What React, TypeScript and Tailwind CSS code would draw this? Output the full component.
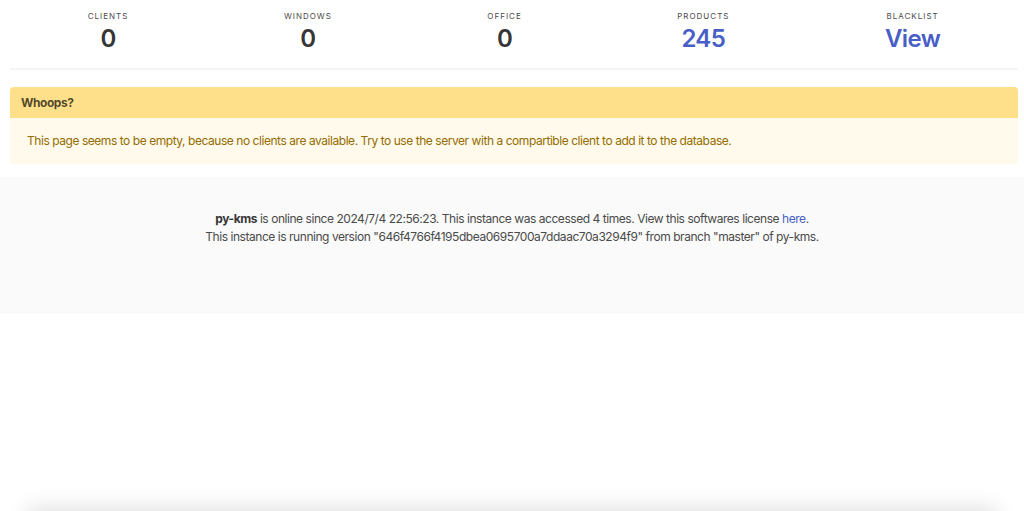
export default function App() {
  const stats = [
    { label: 'Clients', value: '0' },
    { label: 'Windows', value: '0' },
    { label: 'Office', value: '0' },
    { label: 'Products', value: '245', link: true },
    { label: 'Blacklist', value: 'View', link: true },
  ]

  return (
    <div className="min-h-screen bg-white text-[#4a4a4a] text-[12px] leading-[18px] tracking-[-0.45px]" style={{ fontFamily: 'Inter, "Noto Sans", sans-serif' }}>
      <section className="pl-[10px] pr-[6px] pt-[10px]">
        {/* Stats */}
        <nav className="flex items-center justify-between">
          {stats.map(s => (
            <div key={s.label} className="flex flex-1 basis-auto shrink-0 justify-center">
              <div className="text-center">
                <p className="text-[8px] leading-[12px] uppercase tracking-[1px] text-[#4a4a4a] mb-[3px]">{s.label}</p>
                <p className={`text-[24px] leading-[28px] font-semibold tracking-[-0.6px] ${s.link ? 'text-[#485fc7]' : 'text-[#363636]'}`}>
                  {s.value}
                </p>
              </div>
            </div>
          ))}
        </nav>

        <hr className="mt-[15px] mb-[17px] h-[2px] border-0 bg-[#f5f5f5]" />

        {/* Message */}
        <article className="rounded-[4px] bg-[#fffaeb]">
          <div className="rounded-t-[4px] bg-[#ffe08a] px-[11px] py-[6px] leading-[19px] font-bold text-[rgba(0,0,0,0.7)]">
            <p>Whoops?</p>
          </div>
          <div className="px-[17px] py-[14px] text-[#946c00]">
            This page seems to be empty, because no clients are available. Try to use the server with a compartible client to add it to the database.
          </div>
        </article>
      </section>

      {/* Footer */}
      <footer className="mt-[13px] bg-[#fafafa] pt-[33px] pb-[68px] text-center">
        <p>
          <strong className="text-[#363636]">py-kms</strong> is online since 2024/7/4 22:56:23. This instance was accessed 4 times. View this softwares license{' '}
          <a href="#" className="text-[#485fc7]">here</a>.
        </p>
        <p>
          This instance is running version "646f4766f4195dbea0695700a7ddaac70a3294f9" from branch "master" of py-kms.
        </p>
      </footer>

      <div className="mt-[198px] mx-[28px] h-[60px] rounded-[12px] bg-white shadow-[0_0_22px_4px_rgba(0,0,0,0.13)]" />
    </div>
  )
}
